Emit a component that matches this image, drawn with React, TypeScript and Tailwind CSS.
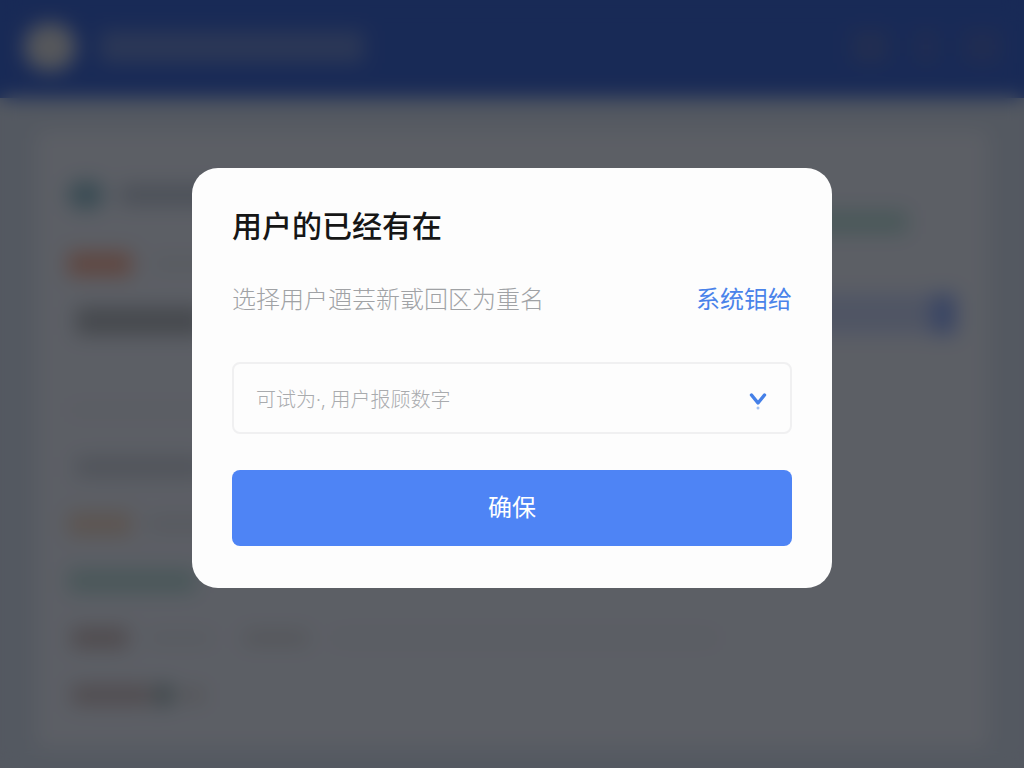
import { useState } from 'react';

const rows = [
  ['h-7 w-9 rounded-full bg-[#8fbcd0]', 'ml-4 h-5 w-40 bg-[#bcc8dc]'],
  ['h-6 w-16 bg-[#efb0a0]', 'ml-5 h-3 w-20 bg-[#dce2ee]'],
  ['ml-2 h-7 w-32 bg-[#afb6c2]'],
];

const moreRows = [
  ['h-2 w-40 bg-[#dfe6f5]'],
  ['ml-2 h-5 w-32 bg-[#c8d0e0]'],
  ['h-6 w-16 bg-[#e8d4ca]', 'ml-4 h-3 w-24 bg-[#d6dce8]'],
  ['h-6 w-32 bg-[#b8dadf]'],
  [
    'ml-1 h-5 w-14 bg-[#c6bac0]',
    'ml-5 h-2 w-16 bg-[#d8dde8]',
    'ml-8 h-3 w-16 bg-[#cfd2da]',
    'ml-6 h-2 w-96 bg-[#dce3f1]',
  ],
  [
    'ml-1 h-5 w-20 bg-[#cabec6]',
    'ml-1 h-5 w-4 bg-[#90a8ae]',
    'ml-2 h-3 w-6 bg-[#d0d0d6]',
  ],
];

function BarRow({ bars }: { bars: string[] }) {
  return (
    <div className="flex h-[57px] items-center">
      {bars.map((bar) => (
        <div key={bar} className={bar} />
      ))}
    </div>
  );
}

function PageBehind() {
  return (
    <div className="flex min-h-screen flex-col bg-[#d2def2]" aria-hidden="true">
      <header className="flex h-[98px] items-center bg-[#3e69d7] px-6 pb-1">
        <div className="h-12 w-13 rounded-full bg-[#d6dae4]" />
        <div className="ml-6 h-8 w-66 bg-[#6d8bd8]" />
        <div className="ml-auto flex items-center gap-7">
          <div className="h-8 w-9 bg-[#5674ca]" />
          <div className="h-8 w-5 bg-[#5270cc]" />
          <div className="h-8 w-9 bg-[#5270cc]" />
        </div>
      </header>
      <main className="mx-9 mt-8 mb-5 flex flex-1 justify-between rounded-lg bg-[#e6edfd] px-8 pt-9 pb-4">
        <div>
          {rows.map((bars, i) => (
            <div key={i} className={i === 1 ? 'mt-3' : ''}>
              <BarRow bars={bars} />
            </div>
          ))}
          <div className="mt-8">
            {moreRows.map((bars, i) => (
              <BarRow key={i} bars={bars} />
            ))}
          </div>
        </div>
        <div className="flex w-40 flex-col pt-11">
          <div className="h-6 w-28 bg-[#b8dcdf]" />
          <div className="mt-15 flex h-10 justify-end bg-[#c6d4fb]">
            <div className="w-6 bg-[#8eabfa]" />
          </div>
        </div>
      </main>
    </div>
  );
}

export default function App() {
  const [name, setName] = useState('');

  return (
    <div className="font-['Noto_Sans_CJK_SC',sans-serif]">
      <PageBehind />

      <div className="fixed inset-0 flex items-center justify-center bg-black/60 px-6 pb-3 backdrop-blur-[10px]">
        <form
          role="dialog"
          aria-labelledby="dialog-title"
          onSubmit={(e) => e.preventDefault()}
          className="w-full max-w-[640px] rounded-[26px] bg-[#fdfdfd] px-10 pt-10 pb-[42px]"
        >
          <h2 id="dialog-title" className="text-[30px] leading-8 font-medium text-[#161616]">
            用户的已经有在
          </h2>

          <div className="mt-[42px] flex items-center justify-between text-2xl leading-8">
            <label htmlFor="name" className="font-light text-[#a0a2a5]">
              选择用户逎芸新戜回区为重名
            </label>
            <a href="#" className="text-[#4a83ea]">
              系统钼给
            </a>
          </div>

          <div className="relative mt-12">
            <select
              id="name"
              value={name}
              onChange={(e) => setName(e.target.value)}
              className="h-[72px] w-full appearance-none rounded-lg border-2 border-[#f0f0f1] bg-transparent px-[22px] pt-1 font-['Noto_Sans','Noto_Sans_CJK_SC',sans-serif] text-xl font-light text-[#a9abae]"
            >
              <option value="">可试为·, 用户报顾数字</option>
            </select>
            <svg
              className="pointer-events-none absolute top-7 right-6 h-5 w-5"
              viewBox="0 0 20 20"
              fill="none"
            >
              <path d="M3.5 5 L10 13 L16.5 5" stroke="#4580e8" strokeWidth="3.4" strokeLinecap="round" strokeLinejoin="round" />
              <circle cx="10" cy="18" r="1.5" fill="#a5c2f2" />
            </svg>
          </div>

          <button
            type="submit"
            className="mt-9 h-[76px] w-full rounded-lg bg-[#4e84f5] pb-1 text-2xl text-white"
          >
            确保
          </button>
        </form>
      </div>
    </div>
  );
}
